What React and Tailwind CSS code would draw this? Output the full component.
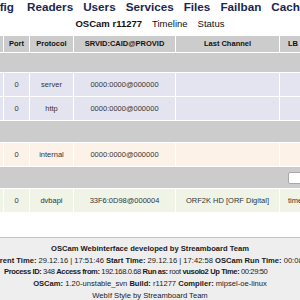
import React from 'react';

const navItems = ['Readers', 'Users', 'Services', 'Files', 'Failban', 'Cache'];

const rows = [
  { type: 'group' },
  { type: 'data', bg: 'bg-[#e4e4f1]', port: '0', proto: 'server', srvid: '0000:0000@000000', channel: '', lb: '' },
  { type: 'data', bg: 'bg-[#e4e4f1]', port: '0', proto: 'http', srvid: '0000:0000@000000', channel: '', lb: '' },
  { type: 'group', h: 'h-[21px]' },
  { type: 'data', bg: 'bg-[#fdf2e7]', port: '0', proto: 'internal', srvid: '0000:0000@000000', channel: '', lb: '' },
  { type: 'group', h: 'h-[21px]', input: true },
  { type: 'data', bg: 'bg-[#eff4e7]', port: '0', proto: 'dvbapi', srvid: '33F6:0D98@000004', channel: 'ORF2K HD [ORF Digital]', lb: 'timeout' },
];

export default function App() {
  return (
    <div className="w-[300px] h-[300px] overflow-hidden bg-white flex flex-col font-['Liberation_Sans',Arial,sans-serif]">
      {/* Main menu */}
      <div className="h-[17px] flex items-end gap-[10px] ml-[-23px] whitespace-nowrap text-[11.7px] font-bold leading-none text-[#1b2750] pb-[4px]">
        <span className="mr-[3px]">Config</span>
        {navItems.map((n) => (
          <span key={n}>{n}</span>
        ))}
      </div>

      {/* Sub menu */}
      <div className="h-[18px] flex justify-center items-end gap-[10px] whitespace-nowrap text-[9.5px] leading-none text-[#111] pb-[7px]">
        <span className="font-bold">OSCam r11277</span>
        <span>Timeline</span>
        <span>Status</span>
      </div>

      {/* Status table */}
      <table className="ml-[-2px] w-[342px] table-fixed border-separate border-spacing-[1px] text-[7.5px] leading-none text-[#333]">
        <colgroup>
          <col className="w-[4px]" />
          <col className="w-[25px]" />
          <col className="w-[43px]" />
          <col className="w-[101px]" />
          <col className="w-[103px]" />
          <col className="w-[60px]" />
        </colgroup>
        <thead>
          <tr className="h-[16px] bg-[#cccccc] text-[#111] font-bold">
            <td className="p-0"></td>
            <td className="p-0 text-center">Port</td>
            <td className="p-0 text-center">Protocol</td>
            <td className="p-0 text-center">SRVID:CAID@PROVID</td>
            <td className="p-0 text-center">Last Channel</td>
            <td className="p-0 pl-[8px] text-left">LB</td>
          </tr>
        </thead>
        <tbody>
          {rows.map((r, i) =>
            r.type === 'group' ? (
              <tr key={i} className={r.h || 'h-[19px]'}>
                <td colSpan={6} className="p-0 bg-[#cccccc]">
                  {r.input && (
                    <div className="ml-[289px] w-[40px] h-[12px] bg-white border border-[#a8a8a8] rounded-[2px]"></div>
                  )}
                </td>
              </tr>
            ) : (
              <tr key={i} className={`h-[23px] ${r.bg}`}>
                <td className="p-0"></td>
                <td className="p-0 text-center">{r.port}</td>
                <td className="p-0 text-center">{r.proto}</td>
                <td className="p-0 text-center">{r.srvid}</td>
                <td className="p-0 text-center">{r.channel}</td>
                <td className="p-0 pl-[8px] text-left whitespace-nowrap overflow-hidden">{r.lb}</td>
              </tr>
            )
          )}
        </tbody>
      </table>

      <div className="flex-1"></div>

      {/* Footer */}
      <div className="h-[63px] shrink-0 bg-[#eeeeee] border-t border-[#c4c4c4] pt-[5px] text-[7.6px] leading-[11.7px] text-[#1a1a1a] whitespace-nowrap">
        <div className="flex justify-center font-bold">
          <span>OSCam Webinterface developed by Streamboard Team</span>
        </div>
        <div className="flex justify-center">
          <span>
            <b>Current Time:</b> 29.12.16 | 17:51:46 <b>Start Time:</b> 29.12.16 | 17:42:58 <b>OSCam Run Time:</b> 00:08:48
          </span>
        </div>
        <div className="flex justify-start pl-[4px]">
          <span className="tracking-[-0.4px]">
            <b>Process ID:</b> 348 <b>Access from:</b> 192.168.0.68 <b>Run as:</b> root <b>vusolo2 Up Time:</b> 00:29:50
          </span>
        </div>
        <div className="flex justify-center">
          <span>
            <b>OSCam:</b> 1.20-unstable_svn <b>Build:</b> r11277 <b>Compiler:</b> mipsel-oe-linux
          </span>
        </div>
        <div className="flex justify-center">
          <span>WebIf Style by Streamboard Team</span>
        </div>
      </div>
    </div>
  );
}
